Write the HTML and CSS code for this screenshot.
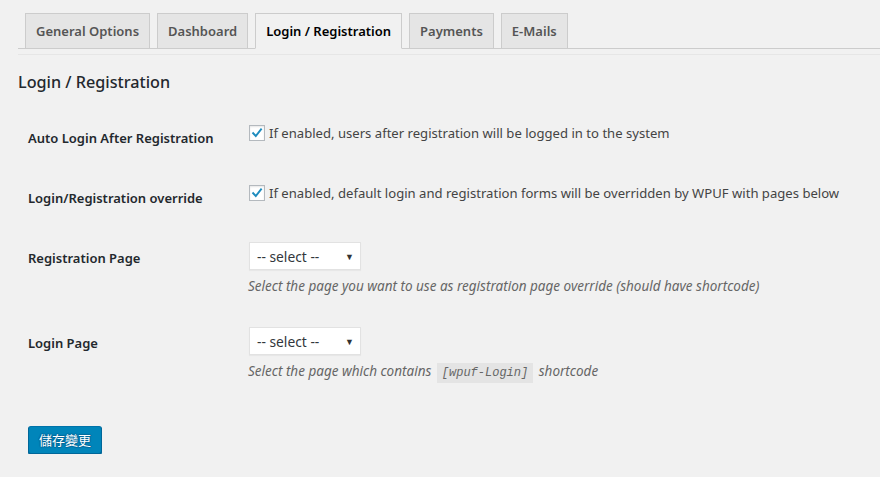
FILE: index.html
```html
<!DOCTYPE html>
<html lang="en">
<head>
<meta charset="utf-8">
<title>Settings</title>
<link rel="stylesheet" href="styles.css">
</head>
<body>
<div class="wrap">
  <nav class="nav-tab-wrapper">
    <a class="nav-tab">General Options</a>
    <a class="nav-tab">Dashboard</a>
    <a class="nav-tab nav-tab-active">Login / Registration</a>
    <a class="nav-tab">Payments</a>
    <a class="nav-tab">E-Mails</a>
  </nav>
  <div class="nav-sub-line"></div>

  <h2 class="section-title">Login / Registration</h2>

  <div class="form-table">
    <div class="row row-check">
      <div class="row-label">Auto Login After Registration</div>
      <div class="row-field">
        <label class="check-line">
          <span class="checkbox"><svg viewBox="0 0 16 16" width="16" height="16"><path d="M3.6 8.2l3 3.2 6-7.6" fill="none" stroke="#1e8cbe" stroke-width="2.2" stroke-linecap="square"/></svg></span>
          If enabled, users after registration will be logged in to the system
        </label>
      </div>
    </div>
    <div class="row row-check">
      <div class="row-label">Login/Registration override</div>
      <div class="row-field">
        <label class="check-line">
          <span class="checkbox"><svg viewBox="0 0 16 16" width="16" height="16"><path d="M3.6 8.2l3 3.2 6-7.6" fill="none" stroke="#1e8cbe" stroke-width="2.2" stroke-linecap="square"/></svg></span>
          If enabled, default login and registration forms will be overridden by WPUF with pages below
        </label>
      </div>
    </div>
    <div class="row row-select">
      <div class="row-label">Registration Page</div>
      <div class="row-field">
        <div class="select"><span>-- select --</span><span class="arrow">&#9660;</span></div>
        <p class="description">Select the page you want to use as registration page override (should have shortcode)</p>
      </div>
    </div>
    <div class="row row-select">
      <div class="row-label">Login Page</div>
      <div class="row-field">
        <div class="select"><span>-- select --</span><span class="arrow">&#9660;</span></div>
        <p class="description">Select the page which contains <code>[wpuf-Login]</code> shortcode</p>
      </div>
    </div>
  </div>

  <div class="submit">
    <button class="button-primary">儲存變更</button>
  </div>
</div>
</body>
</html>
```

FILE: styles.css
```css
html, body {
  margin: 0;
  padding: 0;
  background: #f1f1f1;
}
body {
  font-family: "Noto Sans", "Open Sans", sans-serif;
  color: #23282d;
  font-size: 13px;
}
.wrap {
  padding: 13px 0 0 18px;
}
.nav-tab-wrapper {
  display: flex;
  border-bottom: 1px solid #ccc;
  padding-left: 7px;
  gap: 7px;
  height: 35px;
}
.nav-sub-line {
  height: 5px;
  border-bottom: 1px solid #e6e6e6;
}
.nav-tab {
  display: block;
  box-sizing: border-box;
  height: 36px;
  padding: 5px 10px;
  font-size: 13px;
  line-height: 24px;
  font-weight: 600;
  color: #555;
  background: #e5e5e5;
  border: 1px solid #ccc;
  white-space: nowrap;
}
.nav-tab-active {
  background: #f1f1f1;
  color: #000;
  border-bottom-color: #f1f1f1;
}
.section-title {
  margin: 16px 0 0 0;
  font-size: 16.2px;
  line-height: 22px;
  font-weight: 500;
  color: #23282d;
}
.form-table {
  margin-top: 15px;
}
.row {
  display: flex;
}
.row-check { height: 60px; }
.row-select { height: 85px; }
.row-label {
  box-sizing: border-box;
  width: 230px;
  padding: 21px 10px 0 10px;
  font-size: 13px;
  line-height: 18px;
  font-weight: 600;
  color: #23282d;
}
.row-field {
  padding-top: 14px;
}
.row-check .row-field {
  padding-top: 15px;
}
.check-line {
  display: flex;
  align-items: center;
  gap: 4px;
  font-size: 13.1px;
  line-height: 20px;
  color: #444;
}
.checkbox {
  box-sizing: border-box;
  width: 16px;
  height: 16px;
  border: 1px solid #b4b9be;
  background: #fff;
  box-shadow: inset 0 1px 2px rgba(0,0,0,.1);
  display: flex;
  align-items: center;
  justify-content: center;
  margin-left: 1px;
}
.checkbox svg {
  display: block;
}
.select {
  box-sizing: border-box;
  width: 112px;
  height: 28px;
  margin-left: 1px;
  background: #fff;
  border: 1px solid #e2e2e2;
  box-shadow: 0 1px 1px rgba(0,0,0,.04);
  display: flex;
  align-items: center;
  justify-content: space-between;
  padding: 0 6px 0 7px;
  font-size: 13.8px;
  color: #32373c;
}
.arrow {
  font-size: 9px;
  color: #333;
}
.description {
  margin: 6px 0 0 0;
  font-size: 13.5px;
  line-height: 20px;
  font-style: italic;
  color: #666;
}
code {
  font-family: "Liberation Mono", "DejaVu Sans Mono", monospace;
  font-style: italic;
  font-size: 12px;
  background: #e4e4e4;
  padding: 3px 5px 3px 5px;
  margin: 0 2px;
  color: #666;
}
.submit {
  padding: 28px 0 0 10px;
}
.button-primary {
  box-sizing: border-box;
  height: 28px;
  padding: 0 10px;
  background: #0085ba;
  border: 1px solid;
  border-color: #0073aa #006799 #006799;
  border-radius: 3px;
  box-shadow: 0 1px 0 #006799;
  color: #fff;
  font-family: "Noto Sans CJK TC", "Noto Sans", sans-serif;
  font-size: 13px;
  line-height: 26px;
  text-shadow: 0 -1px 1px #006799, 1px 0 1px #006799, 0 1px 1px #006799, -1px 0 1px #006799;
}
```
